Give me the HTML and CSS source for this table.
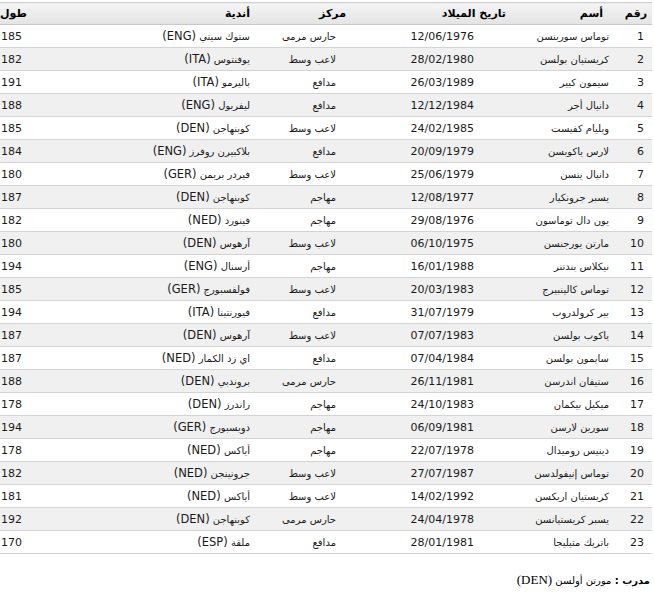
FILE: index.html
```html
<!DOCTYPE html>
<html lang="ar" dir="rtl">
<head>
<meta charset="utf-8">
<title>تشكيلة</title>
<link rel="stylesheet" href="styles.css">
</head>
<body>
<table class="squad">
  <colgroup>
    <col class="w-num"><col class="w-name"><col class="w-date"><col class="w-pos"><col class="w-club"><col class="w-h">
  </colgroup>
  <thead>
    <tr>
      <th class="c-num">رقم</th>
      <th class="c-name">أسم</th>
      <th class="c-date">تاريخ الميلاد</th>
      <th class="c-pos">مركز</th>
      <th class="c-club">أندية</th>
      <th class="c-h">طول</th>
    </tr>
  </thead>
  <tbody>
    <tr><td class="c-num">1</td><td class="c-name">توماس سورينسن</td><td class="c-date">12/06/1976</td><td class="c-pos">حارس مرمى</td><td class="c-club">ستوك سيتي <span class="cc">(ENG)</span></td><td class="c-h">185</td></tr>
    <tr><td class="c-num">2</td><td class="c-name">كريستيان بولسن</td><td class="c-date">28/02/1980</td><td class="c-pos">لاعب وسط</td><td class="c-club">يوفنتوس <span class="cc">(ITA)</span></td><td class="c-h">182</td></tr>
    <tr><td class="c-num">3</td><td class="c-name">سيمون كيير</td><td class="c-date">26/03/1989</td><td class="c-pos">مدافع</td><td class="c-club">باليرمو <span class="cc">(ITA)</span></td><td class="c-h">191</td></tr>
    <tr><td class="c-num">4</td><td class="c-name">دانيال أجر</td><td class="c-date">12/12/1984</td><td class="c-pos">مدافع</td><td class="c-club">ليفربول <span class="cc">(ENG)</span></td><td class="c-h">188</td></tr>
    <tr><td class="c-num">5</td><td class="c-name">ويليام كفيست</td><td class="c-date">24/02/1985</td><td class="c-pos">لاعب وسط</td><td class="c-club">كوبنهاجن <span class="cc">(DEN)</span></td><td class="c-h">185</td></tr>
    <tr><td class="c-num">6</td><td class="c-name">لارس ياكوبسن</td><td class="c-date">20/09/1979</td><td class="c-pos">مدافع</td><td class="c-club">بلاكبيرن روفرز <span class="cc">(ENG)</span></td><td class="c-h">184</td></tr>
    <tr><td class="c-num">7</td><td class="c-name">دانيال ينسن</td><td class="c-date">25/06/1979</td><td class="c-pos">لاعب وسط</td><td class="c-club">فيردر بريمن <span class="cc">(GER)</span></td><td class="c-h">180</td></tr>
    <tr><td class="c-num">8</td><td class="c-name">يسبر جرونكيار</td><td class="c-date">12/08/1977</td><td class="c-pos">مهاجم</td><td class="c-club">كوبنهاجن <span class="cc">(DEN)</span></td><td class="c-h">187</td></tr>
    <tr><td class="c-num">9</td><td class="c-name">يون دال توماسون</td><td class="c-date">29/08/1976</td><td class="c-pos">مهاجم</td><td class="c-club">فينورد <span class="cc">(NED)</span></td><td class="c-h">182</td></tr>
    <tr><td class="c-num">10</td><td class="c-name">مارتن يورجنسن</td><td class="c-date">06/10/1975</td><td class="c-pos">لاعب وسط</td><td class="c-club">آرهوس <span class="cc">(DEN)</span></td><td class="c-h">180</td></tr>
    <tr><td class="c-num">11</td><td class="c-name">نيكلاس بندتنر</td><td class="c-date">16/01/1988</td><td class="c-pos">مهاجم</td><td class="c-club">أرسنال <span class="cc">(ENG)</span></td><td class="c-h">194</td></tr>
    <tr><td class="c-num">12</td><td class="c-name">توماس كالينبيرج</td><td class="c-date">20/03/1983</td><td class="c-pos">لاعب وسط</td><td class="c-club">فولفسبورج <span class="cc">(GER)</span></td><td class="c-h">185</td></tr>
    <tr><td class="c-num">13</td><td class="c-name">بير كرولدروب</td><td class="c-date">31/07/1979</td><td class="c-pos">مدافع</td><td class="c-club">فيورنتينا <span class="cc">(ITA)</span></td><td class="c-h">194</td></tr>
    <tr><td class="c-num">14</td><td class="c-name">ياكوب بولسن</td><td class="c-date">07/07/1983</td><td class="c-pos">لاعب وسط</td><td class="c-club">آرهوس <span class="cc">(DEN)</span></td><td class="c-h">187</td></tr>
    <tr><td class="c-num">15</td><td class="c-name">سايمون بولسن</td><td class="c-date">07/04/1984</td><td class="c-pos">مدافع</td><td class="c-club">اي زد الكمار <span class="cc">(NED)</span></td><td class="c-h">187</td></tr>
    <tr><td class="c-num">16</td><td class="c-name">ستيفان اندرسن</td><td class="c-date">26/11/1981</td><td class="c-pos">حارس مرمى</td><td class="c-club">بروندبي <span class="cc">(DEN)</span></td><td class="c-h">188</td></tr>
    <tr><td class="c-num">17</td><td class="c-name">ميكيل بيكمان</td><td class="c-date">24/10/1983</td><td class="c-pos">مهاجم</td><td class="c-club">راندرز <span class="cc">(DEN)</span></td><td class="c-h">178</td></tr>
    <tr><td class="c-num">18</td><td class="c-name">سورين لارسن</td><td class="c-date">06/09/1981</td><td class="c-pos">مهاجم</td><td class="c-club">دويسبورج <span class="cc">(GER)</span></td><td class="c-h">194</td></tr>
    <tr><td class="c-num">19</td><td class="c-name">دينيس روميدال</td><td class="c-date">22/07/1978</td><td class="c-pos">مهاجم</td><td class="c-club">أياكس <span class="cc">(NED)</span></td><td class="c-h">178</td></tr>
    <tr><td class="c-num">20</td><td class="c-name">توماس إنيفولدسن</td><td class="c-date">27/07/1987</td><td class="c-pos">لاعب وسط</td><td class="c-club">جرونينجن <span class="cc">(NED)</span></td><td class="c-h">182</td></tr>
    <tr><td class="c-num">21</td><td class="c-name">كريستيان اريكسن</td><td class="c-date">14/02/1992</td><td class="c-pos">لاعب وسط</td><td class="c-club">أياكس <span class="cc">(NED)</span></td><td class="c-h">181</td></tr>
    <tr><td class="c-num">22</td><td class="c-name">يسبر كريستيانسن</td><td class="c-date">24/04/1978</td><td class="c-pos">حارس مرمى</td><td class="c-club">كوبنهاجن <span class="cc">(DEN)</span></td><td class="c-h">192</td></tr>
    <tr><td class="c-num">23</td><td class="c-name">باتريك متيليجا</td><td class="c-date">28/01/1981</td><td class="c-pos">مدافع</td><td class="c-club">ملقة <span class="cc">(ESP)</span></td><td class="c-h">170</td></tr>
  </tbody>
</table>
<p class="coach"><b class="ar">مدرب :</b> <span class="ar">مورتن أولسن</span> (DEN)</p>
</body>
</html>
```

FILE: styles.css
```css
body {
  margin: 0;
  background: #fff;
  color: #000;
  font-family: "DejaVu Sans", Verdana, sans-serif;
  font-size: 11px;
}
.squad {
  border-collapse: collapse;
  table-layout: fixed;
  width: 652px;
  margin: 2px 2px 0 0;
}
.w-num  { width: 28px; }
.w-name { width: 108px; }
.w-date { width: 166px; }
.w-pos  { width: 88px; }
.w-club { width: 230px; }
.w-h    { width: 32px; }

.squad th,
.squad td {
  height: 22px;
  padding: 0;
  text-align: right;
  white-space: nowrap;
  overflow: hidden;
  border-bottom: 1px solid #d3d3d3;
  vertical-align: middle;
}
.squad thead th {
  font-weight: bold;
  background: linear-gradient(#f4f4f4, #e3e3e3);
  border-top: 1px solid #d0d0d0;
  border-bottom: 1px solid #c8c8c8;
  height: 21px;
}
.squad tbody tr:nth-child(even) td {
  background: #f0f0f0;
}
.squad td { color: #1a1a1a; }

td.c-name,
td.c-pos,
td.c-club { font-size: 10px; }
td.c-club .cc { font-size: 11.5px; }

td.c-num  { padding-right: 8px; }
td.c-name { padding-right: 15px; }
td.c-date { padding-right: 42px; }
td.c-pos  { padding-right: 14px; }
td.c-club { padding-right: 12px; }
td.c-h    { padding-right: 10px; }

th.c-num  { padding-right: 5px; }
th.c-name { padding-right: 21px; }
th.c-date { padding-right: 10px; }
th.c-pos  { padding-right: 4px; }
th.c-club { padding-right: 12px; }
th.c-h    { text-align: left; padding-left: 0; }

.coach {
  margin: 18px 4px 0 0;
  font-family: "Liberation Serif", "Times New Roman", serif;
  font-size: 13px;
  line-height: 16px;
}
.coach .ar {
  font-family: "DejaVu Sans", sans-serif;
  font-size: 10px;
}
.coach b.ar { font-weight: bold; }
```
